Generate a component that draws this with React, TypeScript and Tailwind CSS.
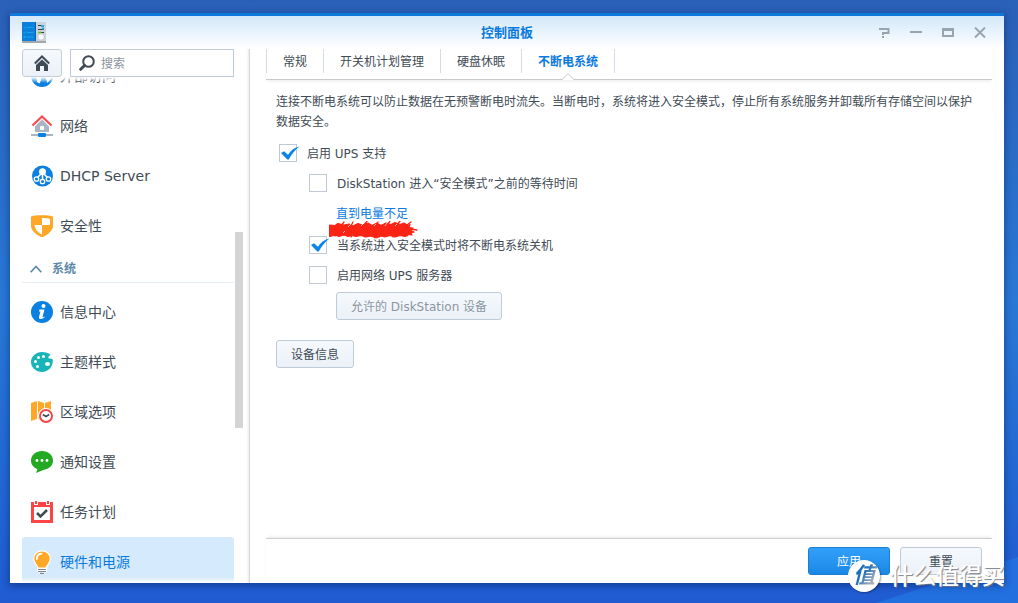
import { useState } from "react";
import type { ReactNode } from "react";

function PanelLogo() {
  return (
    <svg width="24" height="21" viewBox="0 0 24 21" aria-hidden="true">
      <rect x="13" y="0" width="11" height="20" fill="#cdd2d6" />
      <rect x="0" y="19" width="24" height="2" fill="#a3a8ac" />
      <rect x="0" y="0" width="14" height="19" fill="#0a80dc" />
      <rect x="13" y="0" width="1" height="19" fill="#0562b0" />
      <g stroke="#16a4ea" strokeWidth="1" fill="none">
        <path d="M1.500 5.500l1 1 1.500-2M5 5.500h6.500M1.500 10.500l1 1 1.500-2M5 10.500h6.500M5 15h6.500" />
        <path d="M1.500 15h2" strokeWidth="2" />
      </g>
      <path d="M16 3.500h6M16 7.500h6M16 10.500h6" stroke="#343b42" strokeWidth="1" />
      <path d="M19 4h3M20 6.500h2" stroke="#25a8e8" strokeWidth="2" />
      <path d="M16 10.500h3.500" stroke="#5cc32c" strokeWidth="1.500" />
      <circle cx="19" cy="15" r="3" fill="#f8fbfd" stroke="#aab2b9" strokeWidth=".4" />
    </svg>
  );
}

function GlobeIcon() {
  return (
    <svg width="22" height="22" viewBox="0 0 22 22" aria-hidden="true">
      <circle cx="11" cy="11" r="11" fill="#0a80e0" />
      <path d="M1 9l7-2 3 4-1 4-1.500 3.500-2.500-1.500-1-5-3-1zM14 10l6-1 1 4-3 3-1.500 2-1.500-4z" fill="#fff" />
    </svg>
  );
}

function NetworkIcon() {
  return (
    <svg width="22" height="22" viewBox="0 0 22 22" aria-hidden="true">
      <path d="M4 10l7-6.500L18 10v7H4z" fill="#a9b5c2" />
      <path d="M2 10.500L11 1.500l9 9" fill="none" stroke="#fff" strokeWidth="4" />
      <path d="M1.500 10.500L11 1.500l9.500 9" fill="none" stroke="#fb4a4c" strokeWidth="2.200" />
      <rect x="9" y="11" width="4" height="4" rx="1" fill="#fff" />
      <rect x="0" y="19" width="22" height="2" fill="#a9b5c2" />
      <rect x="7" y="18" width="8" height="4" rx="1" fill="#0a80e0" />
    </svg>
  );
}

function DhcpIcon() {
  return (
    <svg width="22" height="22" viewBox="0 0 22 22" aria-hidden="true">
      <circle cx="11.500" cy="11" r="10.500" fill="#0a80e0" />
      <path d="M11.500 8v6M10 9l-4 4M13 9l4 4" stroke="#fff" strokeWidth="1.500" />
      <circle cx="11.500" cy="6.800" r="3.500" fill="#fff" />
      <g fill="#0a80e0" stroke="#fff" strokeWidth="1.300">
        <circle cx="5.500" cy="14" r="2.200" />
        <circle cx="11.500" cy="16.500" r="2.200" />
        <circle cx="17.500" cy="14" r="2.200" />
      </g>
    </svg>
  );
}

function ShieldIcon() {
  return (
    <svg width="22" height="22" viewBox="0 0 22 22" aria-hidden="true">
      <path d="M0 1.500C4-.3 18-.3 22 1.500V11c0 5-6 9-11 11.500C6 20 0 16 0 11z" fill="#ffa726" />
      <path d="M11 3c3 0 6 .3 8 1v6h-8z M11 10v9.500C7 17.500 4 14.500 3.500 10z" fill="#fff" />
    </svg>
  );
}

function InfoIcon() {
  return (
    <svg width="22" height="22" viewBox="0 0 22 22" aria-hidden="true">
      <circle cx="11" cy="11" r="11" fill="#0a80e0" />
      <circle cx="12.500" cy="5" r="2" fill="#fff" />
      <path d="M8.500 8.500h5l-2 7.500c0 .5.800.3 1.700-.6l.6.700c-2 2.200-6.600 3-5.700-.4L9.400 10.500H8z" fill="#fff" />
    </svg>
  );
}

function PaletteIcon() {
  return (
    <svg width="22" height="22" viewBox="0 0 22 22" aria-hidden="true">
      <path
        d="M11 1c3.500 0 6.500 1 8.500 2.500l-2 2.300c-.7 1 .5 2 1.500 1.700L21.500 8C23 14 18 21 11 21 5 21 0 16.500 0 11S5 1 11 1z"
        fill="#18b5b8"
      />
      <g fill="#fff">
        <circle cx="7.500" cy="6.500" r="1.500" />
        <circle cx="12.500" cy="5.500" r="1.500" />
        <circle cx="4.500" cy="10.500" r="1.500" />
        <circle cx="6.500" cy="15.500" r="1.500" />
        <ellipse cx="16.500" cy="13" rx="2.500" ry="2.100" />
      </g>
    </svg>
  );
}

function RegionIcon() {
  return (
    <svg width="22" height="22" viewBox="0 0 22 22" aria-hidden="true">
      <path d="M0 2l6-2v18l-6 2zM7 0l6 2v18l-6-2zM14 2l6-2v18l-6 2z" fill="#ffa726" />
      <circle cx="15" cy="15" r="8" fill="#fff" />
      <circle cx="15" cy="15" r="6" fill="#fff" stroke="#f04848" strokeWidth="2" />
      <path d="M11.800 13.500l3.200 2 3.200-2" fill="none" stroke="#404b56" strokeWidth="1.500" />
    </svg>
  );
}

function MessageIcon() {
  return (
    <svg width="22" height="22" viewBox="0 0 22 22" aria-hidden="true">
      <path d="M11 0c6 0 11 4 11 9.500 0 5-4 8.500-9 9.300L5 22l1.500-4C2.500 16.800 0 13.500 0 9.500 0 4 5 0 11 0z" fill="#22aa22" />
      <g fill="#fff">
        <circle cx="6" cy="9.500" r="1.400" />
        <circle cx="11" cy="9.500" r="1.400" />
        <circle cx="16" cy="9.500" r="1.400" />
      </g>
    </svg>
  );
}

function TaskIcon() {
  return (
    <svg width="22" height="22" viewBox="0 0 22 22" aria-hidden="true">
      <rect x="0" y="1" width="22" height="21" fill="#fb4444" />
      <rect x="3" y="6" width="16" height="13" fill="#fff" />
      <path d="M5 0v4M17 0v4" stroke="#fff" strokeWidth="4" />
      <path d="M5 0v3M17 0v3" stroke="#fb4444" strokeWidth="2" />
      <path d="M6 12l3.500 3.500L16 9" fill="none" stroke="#404b56" strokeWidth="2.500" />
    </svg>
  );
}

function BulbIcon() {
  return (
    <svg width="22" height="24" viewBox="0 0 22 24" aria-hidden="true">
      <path
        d="M11 .8c4.600 0 8.300 3.400 8.300 7.900 0 4.300-3 5.500-4.300 9.300H7C5.700 14.200 2.700 13 2.700 8.700 2.700 4.200 6.400.8 11 .8z"
        fill="#ffa726"
        stroke="#fff"
        strokeWidth="1.200"
      />
      <path d="M5.800 9c0-3 2-5 4.700-5.300" fill="none" stroke="#fff" strokeWidth="1.800" strokeLinecap="round" />
      <path d="M6 18h10v3l-3 2.500H9L6 21z" fill="#fff" />
      <path d="M7 19.500h8M7 21.500h8M9 23.300h4" stroke="#7d868f" strokeWidth="1.200" />
    </svg>
  );
}

const networkItems: { label: string; icon: ReactNode }[] = [
  { label: "外部访问", icon: <GlobeIcon /> },
  { label: "网络", icon: <NetworkIcon /> },
  { label: "DHCP Server", icon: <DhcpIcon /> },
  { label: "安全性", icon: <ShieldIcon /> },
];

const systemItems: { label: string; icon: ReactNode }[] = [
  { label: "信息中心", icon: <InfoIcon /> },
  { label: "主题样式", icon: <PaletteIcon /> },
  { label: "区域选项", icon: <RegionIcon /> },
  { label: "通知设置", icon: <MessageIcon /> },
  { label: "任务计划", icon: <TaskIcon /> },
  { label: "硬件和电源", icon: <BulbIcon /> },
];

const tabs = ["常规", "开关机计划管理", "硬盘休眠", "不断电系统"];

function NavItem({ label, icon, active }: { label: string; icon: ReactNode; active?: boolean }) {
  return (
    <li>
      <a
        href="#"
        className={`flex h-[50px] items-center gap-[7px] rounded-[3px] pl-[9px] text-sm ${
          active ? "bg-[#d5eafd] text-[#0a7adf]" : "text-[#414b55]"
        }`}
      >
        {icon}
        {label}
      </a>
    </li>
  );
}

function Check({ id, label, checked }: { id: string; label: string; checked?: boolean }) {
  return (
    <div className="flex h-[30px] items-center gap-[10px]">
      <span className="relative flex">
        <input
          id={id}
          type="checkbox"
          defaultChecked={checked}
          className="peer size-[18px] appearance-none border border-[#bfcad5] bg-white"
        />
        <svg
          className="pointer-events-none absolute left-0 top-0 hidden peer-checked:block"
          width="22"
          height="18"
          viewBox="0 0 22 18"
          aria-hidden="true"
        >
          <path d="M2 9L5 7.300l4 3.400C11.500 7 15 3.800 20.300 2.600 15.500 6.500 12.300 10.800 9.800 15.500H8.300z" fill="#0a84ea" />
        </svg>
      </span>
      <label htmlFor={id} className="pt-0.5">
        {label}
      </label>
    </div>
  );
}

const plainButton =
  "h-7 rounded-[3px] border border-[#bfcbd8] bg-linear-to-b from-[#f5f9fe] to-[#ebf1f7] pt-0.5 text-center";

function Sidebar() {
  return (
    <aside className="flex w-60 shrink-0 flex-col border-r border-[#d4d6d8] pl-3 shadow-[inset_-3px_0_3px_-2px_#e8e8e8]">
      <div className="flex shrink-0 gap-2 pr-[15px]">
        <button
          aria-label="主页"
          className="flex h-7 w-10 items-center justify-center rounded-[3px] border border-[#c3ceda] bg-linear-to-b from-[#f5f9fe] to-[#ebf1f7]"
        >
          <svg width="16" height="16" viewBox="0 0 16 16" aria-hidden="true">
            <path d="M.8 8.500L8 1.500l7.200 7" fill="none" stroke="#414b55" strokeWidth="2" />
            <path d="M8 4.500l6 5.500v6h-4v-5H6v5H2v-6z" fill="#414b55" />
          </svg>
        </button>
        <div className="flex h-7 min-w-0 flex-1 items-center gap-[6px] border border-[#bfcbd8] bg-white pl-2">
          <svg width="16" height="16" viewBox="0 0 16 16" className="shrink-0" aria-hidden="true">
            <circle cx="9.500" cy="6.500" r="5.300" fill="none" stroke="#414b55" strokeWidth="2" />
            <path d="M5.500 10.500L1.700 14.300" stroke="#414b55" strokeWidth="3" strokeLinecap="round" />
          </svg>
          <input
            aria-label="搜索"
            placeholder="搜索"
            className="h-full min-w-0 flex-1 bg-transparent pt-0.5 text-xs outline-none placeholder:text-[#8a939c]"
          />
        </div>
      </div>
      <div className="flex min-h-0 flex-1">
        <nav className="relative min-w-0 flex-1 overflow-hidden">
          <div className="-mt-[26px]">
            <ul>
              {networkItems.map((item) => (
                <NavItem key={item.label} {...item} />
              ))}
            </ul>
            <button className="mb-1 flex h-8 w-full items-center gap-[10px] border-b border-[#e3ebf4] pl-2 pt-[5px] text-xs font-bold text-[#5c87a8]">
              <svg width="12" height="8" viewBox="0 0 12 8" aria-hidden="true">
                <path d="M.7 7.300L6 1.500l5.300 5.800" fill="none" stroke="#5c87a8" strokeWidth="1.700" />
              </svg>
              系统
            </button>
            <ul>
              {systemItems.map((item) => (
                <NavItem key={item.label} {...item} active={item.label === "硬件和电源"} />
              ))}
            </ul>
          </div>
          <div className="absolute inset-x-0 top-0 h-[6px] bg-linear-to-b from-white to-transparent" />
          <div className="absolute inset-x-0 bottom-0 h-[6px] bg-linear-to-t from-white to-transparent" />
        </nav>
        <div className="w-[15px] shrink-0 pl-px pt-[155px]">
          <div className="h-[196px] w-2 bg-[#d2d4d6]" />
        </div>
      </div>
    </aside>
  );
}

function Scribble() {
  return (
    <svg
      className="pointer-events-none absolute -left-[7px] top-[15px]"
      width="90"
      height="18"
      viewBox="0 0 90 18"
      aria-hidden="true"
    >
      <path
        d="M1 4l5 .5 3-2 6 1.500 5-1 4 2 5-2.500 4 1.500 6-2 4 2.500 5-2.500 4 2.500 5-2.500 5 1.500 4-2 5 2 4-1.500 4 2.500 2-1-1 3 4 .5-3 2 4 2-3 1 1 2-4-.5-3 2-5-1-5 1.500-5-1.500-5 1.500-4-1-5 2-5-2-5 1-5-1.500-5 1-4-1-4 1-4-1.500-5 1.500-4-1.500-5 1.500-3-1.500-4 .5 1-2.500-4-.5 3-2-3-2.500z"
        fill="#fb2414"
        stroke="#fb2414"
        strokeWidth="1.200"
        strokeLinejoin="round"
      />
      <g fill="none" stroke="#fb2414" strokeWidth="1.300" strokeLinecap="round">
        <path d="M12 5l3-4M22 5l2-4M35 4l3-4M47 4l2-3M58 4l3-4M68 4l3-4M78 4l4-3M2 7h6M82 8l6 1M9 12l-3 3M24 13l-2 3M38 13l-2 3M52 13l-2 3M66 13l-2 3M80 12l-2 3" />
      </g>
      <g stroke="#fff" strokeOpacity=".75" strokeWidth=".9">
        <path d="M19 6l3-3M32 5l2-2M45 5l2-2M56 5l2-3M66 5l2-2M14 12l2-2" />
      </g>
    </svg>
  );
}

function UpsPanel() {
  return (
    <section className="flex-1 px-[10px] pt-3 text-xs text-[#414b55]">
      <p className="leading-5">
        连接不断电系统可以防止数据在无预警断电时流失。当断电时，系统将进入安全模式，停止所有系统服务并卸载所有存储空间以保护数据安全。
      </p>
      <div className="pl-[3px] pt-[6px]">
        <Check id="ups" label="启用 UPS 支持" checked />
        <div className="pl-[30px]">
          <Check id="wait" label="DiskStation 进入“安全模式”之前的等待时间" />
          <div className="flex h-8 items-center pl-[27px]">
            <span className="relative">
              <a href="#" className="text-[#0a7adf]">
                直到电量不足
              </a>
              <Scribble />
            </span>
          </div>
          <Check id="shutdown" label="当系统进入安全模式时将不断电系统关机" checked />
          <Check id="server" label="启用网络 UPS 服务器" />
          <button disabled className={`${plainButton} ml-[27px] mt-[2px] block px-[14px] text-[#8d969f]`}>
            允许的 DiskStation 设备
          </button>
        </div>
      </div>
      <button className={`${plainButton} mt-5 block px-[14px]`}>设备信息</button>
    </section>
  );
}

function WindowControls() {
  return (
    <div className="flex justify-end gap-5 pr-[18px]">
      <button aria-label="帮助">
        <svg width="12" height="12" viewBox="0 0 12 12" aria-hidden="true">
          <path d="M1 2h9.500v4H5v2" fill="none" stroke="#98a5b0" strokeWidth="2" />
          <path d="M4 10h2" stroke="#98a5b0" strokeWidth="2" />
        </svg>
      </button>
      <button aria-label="最小化">
        <svg width="12" height="12" viewBox="0 0 12 12" aria-hidden="true">
          <path d="M0 5h12" stroke="#98a5b0" strokeWidth="2" />
        </svg>
      </button>
      <button aria-label="最大化">
        <svg width="12" height="12" viewBox="0 0 12 12" aria-hidden="true">
          <path d="M1 2v7h10V2" fill="none" stroke="#98a5b0" strokeWidth="2" />
          <path d="M0 2.500h12" stroke="#98a5b0" strokeWidth="3" />
        </svg>
      </button>
      <button aria-label="关闭">
        <svg width="12" height="12" viewBox="0 0 12 12" aria-hidden="true">
          <path d="M1 .5l10 10M11 .5l-10 10" stroke="#98a5b0" strokeWidth="2" />
        </svg>
      </button>
    </div>
  );
}

export default function App() {
  const [tab, setTab] = useState("不断电系统");
  return (
    <div className="relative flex h-screen overflow-hidden bg-linear-to-b from-[#2a60b8] via-[#2878d6] via-50% to-[#205bd2] pb-5 pl-[10px] pr-[14px] pt-[13px] font-['DejaVu_Sans','Noto_Sans_CJK_SC',sans-serif]">
      <svg className="absolute bottom-0 right-0" width="142" height="46" viewBox="0 0 142 46" aria-hidden="true">
        <path d="M0 46L142 0v46z" fill="#226fe0" />
      </svg>
      <div className="relative flex min-w-0 flex-1 flex-col border-t-[3px] border-[#0b7adb] bg-white shadow-[0_2px_7px_1px_rgba(0,20,70,0.4)]">
        <header className="grid h-[33px] shrink-0 grid-cols-[1fr_auto_1fr] items-center bg-linear-to-b from-[#d3e8f9] to-white">
          <div className="pl-3">
            <PanelLogo />
          </div>
          <h1 className="text-[13px] font-bold text-[#0a7adf]">控制面板</h1>
          <WindowControls />
        </header>
        <div className="flex min-h-0 flex-1">
          <Sidebar />
          <main className="flex min-w-0 flex-1 flex-col pl-4 pr-3">
            <div role="tablist" className="flex h-[31px] shrink-0 items-start border-b border-[#c8cacc] shadow-[0_2px_3px_-1px_#e8e8e8]">
              {tabs.map((name) => (
                <button
                  key={name}
                  role="tab"
                  aria-selected={name === tab}
                  onClick={() => setTab(name)}
                  className={`relative h-6 border-r border-[#d3dde8] px-4 pt-0.5 text-xs first:border-l ${
                    name === tab ? "font-bold text-[#0a7adf]" : "text-[#414b55]"
                  }`}
                >
                  {name}
                  {name === tab && (
                    <svg
                      className="absolute left-1/2 top-6 -ml-[6px]"
                      width="12"
                      height="7"
                      viewBox="0 0 12 7"
                      aria-hidden="true"
                    >
                      <path d="M0 7L6 .7 12 7z" fill="#fff" />
                      <path d="M0 6.500L6 .7l6 5.800" fill="none" stroke="#c8cacc" />
                    </svg>
                  )}
                </button>
              ))}
            </div>
            <UpsPanel />
            <footer className="flex shrink-0 justify-end gap-[10px] border-t border-[#cfcfcf] px-[10px] pb-2 pt-2 text-xs shadow-[0_-2px_3px_-1px_#e8e8e8]">
              <button className="h-7 w-[82px] rounded-[3px] border border-[#1a7fd0] bg-linear-to-b from-[#32a0fa] to-[#1a88e6] pt-0.5 text-white">
                应用
              </button>
              <button className={`${plainButton} w-[82px] text-[#414b55]`}>重置</button>
            </footer>
          </main>
        </div>
      </div>
      <div className="pointer-events-none absolute bottom-[11px] right-[13px] flex items-center gap-[10px]">
        <span className="flex size-8 items-center justify-center rounded-full bg-white shadow-[1px_1px_2px_rgba(0,0,0,0.35)]">
          <span className="bg-linear-to-br from-[#1f6fb8] from-45% to-[#a8aeb5] to-75% bg-clip-text px-0.5 text-[22px] font-bold italic leading-8 text-transparent">
            值
          </span>
        </span>
        <span className="text-[23px] font-medium leading-8 text-white [text-shadow:1px_1px_1px_rgba(110,118,128,0.9)]">
          什么值得买
        </span>
      </div>
    </div>
  );
}
